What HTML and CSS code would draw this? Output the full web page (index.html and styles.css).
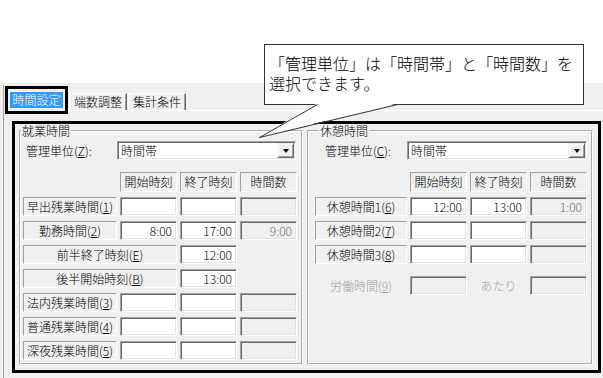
FILE: index.html
```html
<!DOCTYPE html>
<html lang="ja">
<head>
  <meta charset="utf-8">
  <title>時間設定</title>
  <link rel="stylesheet" href="styles.css">
</head>
<body>
  <div class="note-area"></div>

  <div class="window">
    <div class="frame">
      <div class="tabs">
        <div class="tab tab-active"><span>時間設定</span></div>
        <div class="tab">端数調整</div>
        <div class="tab">集計条件</div>
      </div>

      <div class="page">
        <div class="highlight">

          <fieldset class="group group-work">
            <legend>就業時間</legend>
            <div class="unit">
              <label class="unit-label">管理単位(<u>Z</u>):</label>
              <div class="combo"><span>時間帯</span><span class="combo-btn"></span></div>
            </div>
            <div class="grid">
              <div></div>
              <div class="head">開始時刻</div>
              <div class="head">終了時刻</div>
              <div class="head">時間数</div>

              <div class="name">早出残業時間(<u>1</u>)</div>
              <input class="field" type="text" value="">
              <input class="field" type="text" value="">
              <input class="field" type="text" value="" disabled>

              <div class="name">勤務時間(<u>2</u>)</div>
              <input class="field" type="text" value="8:00">
              <input class="field" type="text" value="17:00">
              <input class="field" type="text" value="9:00" disabled>

              <div class="name name-wide">前半終了時刻(<u>E</u>)</div>
              <input class="field" type="text" value="12:00">
              <div></div>

              <div class="name name-wide">後半開始時刻(<u>B</u>)</div>
              <input class="field" type="text" value="13:00">
              <div></div>

              <div class="name">法内残業時間(<u>3</u>)</div>
              <input class="field" type="text" value="">
              <input class="field" type="text" value="">
              <input class="field" type="text" value="" disabled>

              <div class="name">普通残業時間(<u>4</u>)</div>
              <input class="field" type="text" value="">
              <input class="field" type="text" value="">
              <input class="field" type="text" value="" disabled>

              <div class="name">深夜残業時間(<u>5</u>)</div>
              <input class="field" type="text" value="">
              <input class="field" type="text" value="">
              <input class="field" type="text" value="" disabled>
            </div>
          </fieldset>

          <fieldset class="group group-rest">
            <legend>休憩時間</legend>
            <div class="unit">
              <label class="unit-label">管理単位(<u>C</u>):</label>
              <div class="combo"><span>時間帯</span><span class="combo-btn"></span></div>
            </div>
            <div class="grid">
              <div></div>
              <div class="head">開始時刻</div>
              <div class="head">終了時刻</div>
              <div class="head">時間数</div>

              <div class="name">休憩時間1(<u>6</u>)</div>
              <input class="field" type="text" value="12:00">
              <input class="field" type="text" value="13:00">
              <input class="field" type="text" value="1:00" disabled>

              <div class="name">休憩時間2(<u>7</u>)</div>
              <input class="field" type="text" value="">
              <input class="field" type="text" value="">
              <input class="field" type="text" value="" disabled>

              <div class="name">休憩時間3(<u>8</u>)</div>
              <input class="field" type="text" value="">
              <input class="field" type="text" value="">
              <input class="field" type="text" value="" disabled>

              <div class="plain late">労働時間(<u>9</u>)</div>
              <input class="field late" type="text" value="" disabled>
              <div class="plain late">あたり</div>
              <input class="field late" type="text" value="" disabled>
            </div>
          </fieldset>

        </div>
      </div>
    </div>
  </div>

  <!-- balloon note drawn over the dialog -->
  <div class="callout">
    <div class="callout-line">「管理単位」は「時間帯」と「時間数」を</div>
    <div class="callout-line">選択できます。</div>
  </div>
  <svg class="callout-tail" width="150" height="42" viewBox="0 0 150 42">
    <polygon points="62,3.5 142,3.5 4,37" fill="#fff"/>
    <polyline points="62.5,4.5 4.5,37.5 142.5,4.5" fill="none" stroke="#333" stroke-width="1"/>
  </svg>
</body>
</html>
```

FILE: styles.css
```css
* {
  box-sizing: border-box;
}

body {
  margin: 0;
  width: 603px;
  height: 378px;
  overflow: hidden;
  position: relative;
  background: #fff;
  font-family: "Noto Sans CJK JP", "Noto Sans", sans-serif;
  font-size: 12px;
  font-weight: 300;
  line-height: 15px;
  color: #000;
}

.note-area {
  height: 83px;
}

/* dialog */

.window {
  height: 295px;
  padding: 2px 0 0 3px;
  background: #f0f0f0;
}

.frame {
  height: 100%;
  border-left: 1px solid #a0a0a0;
}

.tabs {
  display: flex;
  align-items: flex-start;
  height: 25px;
  padding: 1px 0 0 1px;
}

.tab {
  height: 17px;
  margin: 7px 0 0 1px;
  padding: 0 4px;
  line-height: 15px;
  border-top: 1px solid #fff;
  border-left: 1px solid #fff;
  border-right: 1px solid #696969;
  box-shadow: inset -1px 0 0 #a0a0a0;
  white-space: nowrap;
}

.tab-active {
  width: 63px;
  height: 28px;
  margin: 0;
  padding: 3px 2px;
  border: 3px solid #000;
  box-shadow: none;
  background: #f0f0f0;
  position: relative;
  z-index: 1;
}

.tab-active span {
  display: block;
  height: 16px;
  line-height: 16px;
  background: #3399ff;
  color: #fff;
  text-align: center;
}

.page {
  border-top: 1px solid #fff;
  padding: 10px 0 0 8px;
}

.highlight {
  display: flex;
  gap: 4px;
  width: 589px;
  height: 252px;
  padding-left: 4px;
  border: 3px solid #000;
}

/* group boxes */

.group {
  margin: 0;
  min-width: 0;
  height: 241px;
  padding: 4px 2px 0 2px;
  border: 2px groove #fff;
}

.group-work {
  width: 284px;
}

.group-rest {
  width: 286px;
  padding-left: 6px;
}

.group legend {
  padding: 0 1px;
  line-height: 13px;
}

.group-work legend {
  margin-left: -2px;
}

.group-rest legend {
  margin-left: 4px;
}

.unit {
  display: flex;
  align-items: center;
  height: 19px;
  margin-bottom: 12px;
}

.unit-label {
  flex: none;
  width: 94px;
  padding-left: 3px;
}

.group-rest .unit-label {
  width: 92px;
  padding-left: 10px;
}

.combo {
  flex: none;
  display: flex;
  align-items: center;
  justify-content: space-between;
  width: 179px;
  height: 19px;
  padding: 1px 1px 1px 3px;
  background: #fff;
  border: 1px solid;
  border-color: #a0a0a0 #fff #fff #a0a0a0;
  box-shadow: inset 1px 1px 0 #696969, inset -1px -1px 0 #e3e3e3;
}

.group-rest .combo {
  width: 180px;
}

.combo-btn {
  display: flex;
  align-items: center;
  justify-content: center;
  width: 17px;
  height: 15px;
  background: #f0f0f0;
  border: 1px solid;
  border-color: #f0f0f0 #696969 #696969 #f0f0f0;
  box-shadow: inset 1px 1px 0 #fff, inset -1px -1px 0 #a0a0a0;
}

.combo-btn::after {
  content: "";
  border-top: 4px solid #000;
  border-left: 3.5px solid transparent;
  border-right: 3.5px solid transparent;
}

.grid {
  display: grid;
  grid-template-columns: 94px 57px 57px 57px;
  grid-template-rows: 20px;
  grid-auto-rows: 19px;
  gap: 5px 3px;
}

.group-rest .grid {
  grid-template-columns: 92px 57px 57px 57px;
}

.head {
  line-height: 18px;
  text-align: center;
  border: 1px solid;
  border-color: #a0a0a0 #fff #fff #a0a0a0;
}

.name {
  line-height: 17px;
  text-align: center;
  white-space: nowrap;
  border: 1px solid;
  border-color: #a0a0a0 #fff #fff #a0a0a0;
}

.name-wide {
  grid-column: span 2;
}

.plain {
  line-height: 19px;
  text-align: center;
  white-space: nowrap;
  color: #a0a0a0;
}

.field {
  width: 100%;
  height: 19px;
  margin: 0;
  padding: 0 4px 0 2px;
  font: inherit;
  text-align: right;
  color: #000;
  background: #fff;
  border: 1px solid;
  border-color: #a0a0a0 #fff #fff #a0a0a0;
  box-shadow: inset 1px 1px 0 #696969, inset -1px -1px 0 #e3e3e3;
  outline: none;
}

.field:disabled {
  background: #f0f0f0;
  color: #6d6d6d;
}

.late {
  margin-top: 7px;
}

/* balloon note */

.callout {
  position: absolute;
  left: 264px;
  top: 44px;
  width: 320px;
  height: 61px;
  padding: 8px 0 0 4px;
  font-size: 16px;
  background: #fff;
  border: 1px solid #333;
  z-index: 2;
}

.callout-line {
  height: 20px;
  line-height: 20px;
  white-space: nowrap;
}

.callout-tail {
  position: absolute;
  left: 255px;
  top: 100px;
  z-index: 3;
}
```
